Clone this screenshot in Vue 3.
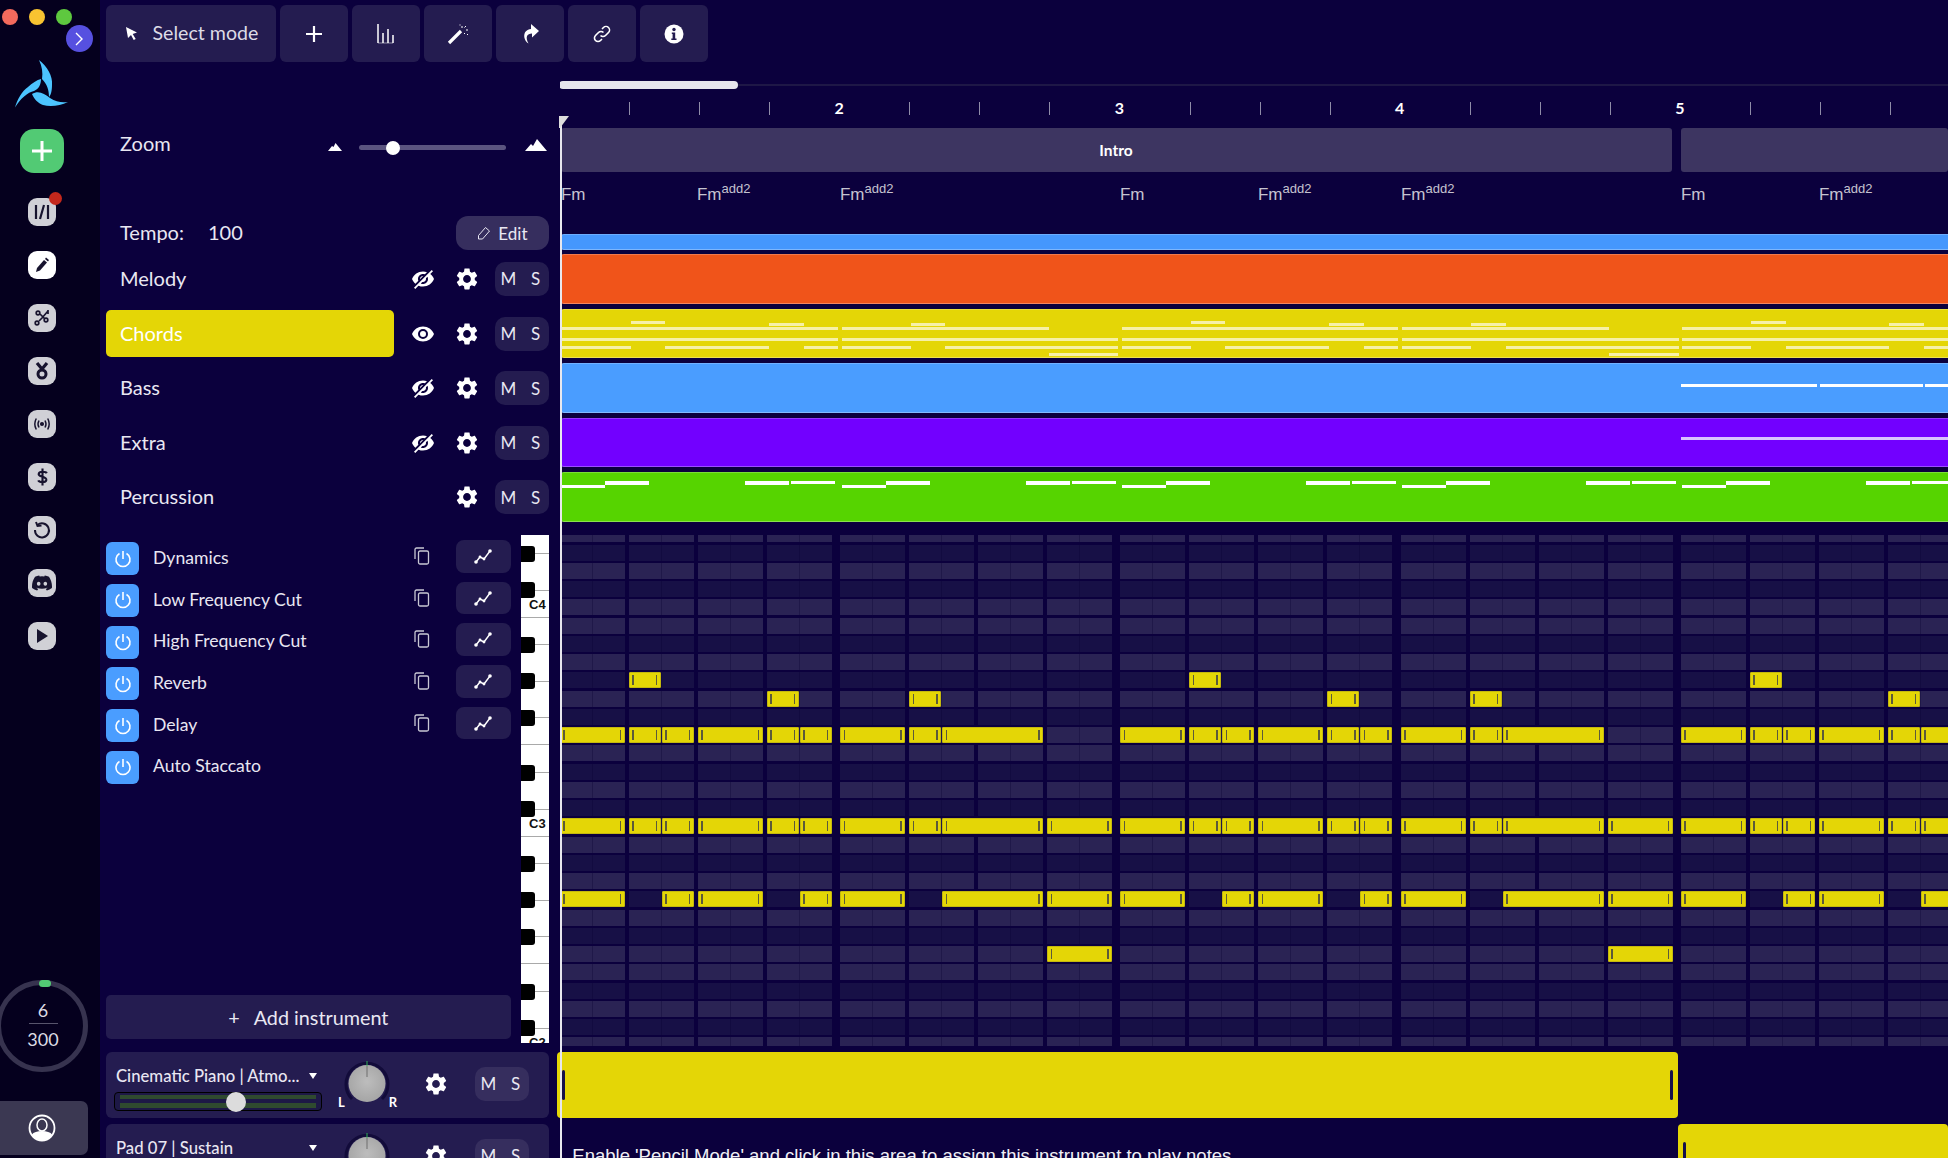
<template>
  <div class="app">
    <aside class="sidebar">
      <div class="dots">
        <span class="dot red"></span>
        <span class="dot yellow"></span>
        <span class="dot green"></span>
      </div>
      <button class="collapse">
        <svg width="12" height="16" viewBox="0 0 12 16"><path d="M3 2l6 6-6 6" fill="none" stroke="#fff" stroke-width="1.4" /></svg>
      </button>
      <svg class="logo" width="53" height="48" viewBox="15 60 53 48">
        <path fill="#4cc4ff" d="M39 60C47 66 53 76 52 85C52 90 51 95 49 97C49 90 47 84 42 79C43 73 42 66 39 60Z" />
        <path fill="#4cc4ff" d="M15 107.500C17 100 22 91 28 87C32 83 37 80 41 79C41 84 39 89 34 91C28 92 20 99 15 107.500Z" />
        <path fill="#4cc4ff" d="M32 94C38 90 44 93 50 98C56 102 62 103 68 102C60 106 50 107 43 105C38 103 34 99 32 94Z" />
      </svg>
      <div class="add-tile">
        <svg width="24" height="24" viewBox="0 0 24 24"><path d="M12 2v20M2 12h20" stroke="#fff" stroke-width="3" /></svg>
      </div>
      <div class="tiles">
        <div class="tile">
          <svg width="18" height="18" viewBox="0 0 18 18"><path d="M3 2v14M15 2v14M11 2L7 16" stroke="#17132e" stroke-width="2.2" fill="none" /></svg>
          <span class="red-dot"></span>
        </div>
        <div class="tile active">
          <svg width="18" height="18" viewBox="0 0 18 18"><path d="M3 16l1-4 7-8 3 2.500-7 8zM12 3l1-1.500 3 2.500-1 1.500z" fill="#17132e" /></svg>
        </div>
        <div class="tile">
          <svg width="20" height="20" viewBox="0 0 20 20" fill="none" stroke="#17132e" stroke-width="1.700">
            <circle cx="6" cy="5" r="1.800" /><circle cx="14" cy="12" r="1.800" /><circle cx="5" cy="15" r="1.800" />
            <path d="M8 6l5 5M7 13l3-3 6-7M16 2v4" />
          </svg>
        </div>
        <div class="tile">
          <svg width="20" height="20" viewBox="0 0 20 20" fill="none" stroke="#17132e">
            <circle cx="10" cy="13" r="4" stroke-width="3" />
            <path d="M5 2l5 6 5-6" stroke-width="3.200" />
          </svg>
        </div>
        <div class="tile">
          <svg width="20" height="20" viewBox="0 0 20 20" fill="none" stroke="#17132e" stroke-width="1.500">
            <circle cx="10" cy="10" r="1.300" fill="#17132e" />
            <path d="M7 6.500q-2 3.500 0 7M13 6.500q2 3.500 0 7M4.300 4.500q-3 5.500 0 11M15.700 4.500q3 5.500 0 11" />
          </svg>
        </div>
        <div class="tile">
          <svg width="17" height="20" viewBox="0 0 20 22" fill="none" stroke="#17132e" stroke-width="2.500">
            <path d="M15 6.500C14 4.500 6 3.800 5.500 7.500C5 11 15 10 14.500 14.500C14 18 6 17.500 5 15M10 1v20" />
          </svg>
        </div>
        <div class="tile">
          <svg width="20" height="20" viewBox="0 0 20 20" fill="none" stroke="#17132e" stroke-width="2">
            <path d="M5.500 5A7 7 0 1 1 3 10" />
            <path d="M4 2l1.500 4 4-.5" />
          </svg>
        </div>
        <div class="tile">
          <svg width="20" height="20" viewBox="0 0 24 24"><path fill="#17132e" :d="discordPath" /></svg>
        </div>
        <div class="tile">
          <svg width="14" height="16" viewBox="0 0 14 16"><path d="M2 1l11 7-11 7z" fill="#17132e" /></svg>
        </div>
      </div>
      <div class="credits">
        <svg width="92" height="92" viewBox="0 0 92 92">
          <circle cx="46" cy="46" r="43.500" fill="none" stroke="#37334f" stroke-width="5" />
          <rect x="43" y="0" width="12" height="7" rx="3.500" fill="#52ca74" />
        </svg>
        <div class="credit-text">
          <span>6</span>
          <i></i>
          <span>300</span>
        </div>
      </div>
      <div class="account">
        <svg width="28" height="28" viewBox="0 0 28 28">
          <circle cx="14" cy="14" r="12.500" fill="none" stroke="#fff" stroke-width="1.800" />
          <ellipse cx="14" cy="11" rx="5" ry="6" fill="none" stroke="#fff" stroke-width="1.500" />
          <path d="M3.500 21c2-3 6-4 10.500-4s8.500 1 10.500 4a13 13 0 0 1-21 0z" fill="#fff" />
        </svg>
      </div>
    </aside>

    <main class="main">
      <div class="toolbar">
        <button class="tool select-tool">
          <svg width="12" height="14" viewBox="0 0 12 14"><path d="M0 0l11 5.500-4.300 1.600 3 5-2 1-2.700-5-3 3z" fill="#fff" /></svg>
          <span>Select mode</span>
        </button>
        <button class="tool">
          <svg width="18" height="18" viewBox="0 0 18 18"><path d="M9 1v16M1 9h16" stroke="#fff" stroke-width="2.200" /></svg>
        </button>
        <button class="tool">
          <svg width="20" height="20" viewBox="0 0 20 20"><path d="M2 0v19M7 9v10M12 5v14M17 11v8" stroke="#fff" stroke-width="1.500" /><path d="M2 19h15" stroke="#fff" stroke-width="0.500" /></svg>
        </button>
        <button class="tool">
          <svg width="22" height="22" viewBox="0 0 22 22">
            <path d="M2 20L14 8" stroke="#fff" stroke-width="3.200" />
            <path d="M15 3v2M19 7h2M19 3l-1.500 1.500M13 1.500v1M20.500 11v1M17 10l1 1" stroke="#fff" stroke-width="1" />
          </svg>
        </button>
        <button class="tool">
          <svg width="18" height="20" viewBox="0 0 18 20"><path d="M10 0l8 7-7 6.500V9.500C6 9.500 4 13 7.500 19.500C2 16 1 6 10 5z" fill="#fff" /></svg>
        </button>
        <button class="tool">
          <svg width="20" height="20" viewBox="0 0 20 20" fill="none" stroke="#fff" stroke-width="1.600">
            <path d="M8.500 11.500a3.500 3.500 0 0 0 5 0l3-3a3.500 3.500 0 0 0-5-5L10 5" />
            <path d="M11.500 8.500a3.500 3.500 0 0 0-5 0l-3 3a3.500 3.500 0 0 0 5 5L10 15" />
          </svg>
        </button>
        <button class="tool">
          <svg width="20" height="20" viewBox="0 0 20 20">
            <circle cx="10" cy="10" r="9.500" fill="#fff" />
            <circle cx="10" cy="5.500" r="1.700" fill="#241c50" />
            <path d="M7.800 8.500h3.400v6h1.300v1.500h-5.200v-1.500h1.300v-4.500h-.8z" fill="#241c50" />
          </svg>
        </button>
      </div>

      <section class="top-section">
        <div class="controls">
          <div class="zoom-row">
            <span class="zoom-label">Zoom</span>
            <svg class="mountain-small" width="14" height="8" viewBox="0 0 14 8"><path d="M0 8l4-5 1.500 1L7.500 0 14 8z" fill="#fff" /></svg>
            <div class="zoom-slider"><span class="zoom-thumb"></span></div>
            <svg class="mountain-big" width="22" height="12" viewBox="0 0 22 12"><path d="M0 12l6-7 2 2L12 0l10 12z" fill="#fff" /></svg>
          </div>
          <div class="tempo-row">
            <span class="tempo-label">Tempo:</span>
            <span class="tempo-value">100</span>
            <button class="edit-btn">
              <svg width="14" height="14" viewBox="0 0 14 14" fill="none" stroke="#e9e7f2" stroke-width="1"><path d="M1.500 9.500L8.500 1.500l4 3.500-7 8H1.500z" /></svg>
              <span>Edit</span>
            </button>
          </div>
          <div class="tracks">
            <div v-for="t in instruments" :key="t.name" class="track-row">
              <div class="track-name" :class="{ selected: t.selected }">{{ t.name }}</div>
              <div class="eye-slot">
                <svg v-if="t.eye === 'on'" width="24" height="24" viewBox="0 0 24 24"><path fill="#fff" :d="eyePath" /></svg>
                <svg v-else-if="t.eye === 'off'" width="24" height="24" viewBox="0 0 24 24"><path fill="#fff" transform="translate(24,0) scale(-1,1)" :d="eyeOffPath" /></svg>
              </div>
              <svg class="gear" width="26" height="26" viewBox="0 0 24 24"><path fill="#fff" :d="gearPath" /></svg>
              <div class="ms-pill"><span>M</span><span>S</span></div>
            </div>
          </div>
        </div>

        <div class="timeline">
          <div class="scroll-track"><span class="scroll-thumb"></span></div>
          <div class="ruler">
            <div v-for="n in 20" :key="n" class="ruler-cell">
              <span v-if="(n - 1) % 4 === 0 && n > 1" class="bar-num">{{ (n - 1) / 4 + 1 }}</span>
              <i v-else-if="n > 1" class="tick"></i>
            </div>
          </div>
          <div class="sections">
            <div class="section-block first">Intro</div>
            <div class="section-block rest"></div>
          </div>
          <div class="chord-row">
            <div v-for="(c, i) in chords" :key="i" class="chord" :style="{ width: c.width + 'px' }">
              Fm<sup v-if="c.add">add2</sup>
            </div>
          </div>
          <div class="mini-tracks">
            <div class="mini thin" style="background: #4597fd"></div>
            <div class="mini" style="background: #f0541a"></div>
            <div class="mini" style="background: #e4d606">
              <i v-for="(m, i) in miniChords" :key="i" class="mini-note pale" :style="m"></i>
            </div>
            <div class="mini" style="background: #4a9dff">
              <i v-for="(m, i) in miniBass" :key="i" class="mini-note" :style="m"></i>
            </div>
            <div class="mini" style="background: #7200ff">
              <i v-for="(m, i) in miniExtra" :key="i" class="mini-note lilac" :style="m"></i>
            </div>
            <div class="mini" style="background: #56d400">
              <i v-for="(m, i) in miniPerc" :key="i" class="mini-note" :style="m"></i>
            </div>
          </div>
        </div>
      </section>

      <section class="mid-section">
        <div class="mid-left">
          <div class="effects">
            <div v-for="(e, i) in effects" :key="e" class="effect-row">
              <div class="power">
                <svg width="20" height="20" viewBox="0 0 20 20" fill="none" stroke="#fff" stroke-width="1.600">
                  <path d="M6.500 4.500a7 7 0 1 0 7 0M10 2v8" />
                </svg>
              </div>
              <span class="effect-name">{{ e }}</span>
              <template v-if="i < 5">
                <svg class="copy" width="16" height="18" viewBox="0 0 16 18" fill="none" stroke="#c9c7d4" stroke-width="1.300">
                  <rect x="4.500" y="4" width="10" height="13" rx="1.500" />
                  <path d="M1 12V2.500A1.500 1.500 0 0 1 2.500 1H10" />
                </svg>
                <button class="curve-btn">
                  <svg width="18" height="15" viewBox="0 0 18 15" fill="#fff">
                    <path d="M2 13l4-5 4 2 6-8" fill="none" stroke="#fff" stroke-width="1.400" />
                    <circle cx="2" cy="13" r="1.800" /><circle cx="6" cy="8" r="1.400" /><circle cx="10" cy="10" r="1.400" /><circle cx="16" cy="2" r="1.800" />
                  </svg>
                </button>
              </template>
            </div>
            <button class="add-instrument"><span class="add-plus">+</span>Add instrument</button>
          </div>
          <div class="piano">
            <div class="piano-inner">
              <div v-for="r in rows" :key="r.k" class="key" :class="{ split: r.pc === 0 || r.pc === 5 }">
                <template v-if="r.black">
                  <i class="key-line"></i>
                  <i class="black-key"></i>
                </template>
                <span v-if="r.label" class="key-label">{{ r.label }}</span>
              </div>
            </div>
          </div>
        </div>

        <div class="roll">
          <div class="roll-inner">
            <div v-for="r in rows" :key="r.k" class="roll-row" :class="{ dark: r.black }">
              <div v-for="b in 6" :key="b" class="bar">
                <div v-for="q in 4" :key="q" class="beat"><i></i><i></i></div>
              </div>
              <div v-for="(n, i) in r.notes" :key="i" class="note" :style="n"></div>
            </div>
          </div>
        </div>
      </section>

      <section class="bottom-section">
        <div class="cards">
          <div v-for="c in cards" :key="c" class="card">
            <div class="card-left">
              <div class="card-name">
                <span>{{ c }}</span>
                <svg width="8" height="6" viewBox="0 0 8 6"><path d="M0 0h8L4 6z" fill="#fff" /></svg>
              </div>
              <div class="volume">
                <i></i><i></i>
                <span class="volume-thumb"></span>
              </div>
            </div>
            <div class="knob">
              <svg width="60" height="50" viewBox="0 0 60 50">
                <path d="M15 39A21 21 0 1 1 45 39" fill="none" stroke="#120b3a" stroke-width="3" />
                <defs>
                  <radialGradient id="knobFill" cx="0.5" cy="0.45" r="0.6">
                    <stop offset="0" stop-color="#bdbdbd" />
                    <stop offset="1" stop-color="#a3a3a3" />
                  </radialGradient>
                </defs>
                <circle cx="30" cy="23.500" r="18.500" fill="url(#knobFill)" />
                <path d="M30 1v5" stroke="#2fae55" stroke-width="1" />
                <path d="M30 6v11" stroke="#6e6e6e" stroke-width="1" />
              </svg>
              <span class="knob-l">L</span>
              <span class="knob-r">R</span>
            </div>
            <svg class="card-gear" width="26" height="26" viewBox="0 0 24 24"><path fill="#fff" :d="gearPath" /></svg>
            <div class="ms-pill card-pill"><span>M</span><span>S</span></div>
          </div>
        </div>
        <div class="lanes">
          <div class="lane">
            <div class="clip first-clip">
              <i class="handle"></i>
              <i class="handle"></i>
            </div>
          </div>
          <div class="lane">
            <p class="hint">Enable 'Pencil Mode' and click in this area to assign this instrument to play notes</p>
            <div class="clip second-clip"><i class="handle"></i></div>
          </div>
        </div>
      </section>

      <div class="playhead"></div>
      <svg class="playhead-cap" width="10" height="12" viewBox="0 0 10 12"><path d="M0 0h10L1 12H0z" fill="#ddd" /></svg>
    </main>
  </div>
</template>

<script setup>
const gearPath = 'M19.14 12.94c.04-.3.06-.61.06-.94 0-.32-.02-.64-.07-.94l2.03-1.58c.18-.14.23-.41.12-.61l-1.92-3.32c-.12-.22-.37-.29-.59-.22l-2.39.96c-.5-.38-1.03-.7-1.62-.94l-.36-2.54c-.04-.24-.24-.41-.48-.41h-3.84c-.24 0-.43.17-.47.41l-.36 2.54c-.59.24-1.13.57-1.62.94l-2.39-.96c-.22-.08-.47 0-.59.22L2.74 8.87c-.12.21-.08.47.12.61l2.03 1.58c-.05.3-.09.63-.09.94s.02.64.07.94l-2.03 1.58c-.18.14-.23.41-.12.61l1.92 3.32c.12.22.37.29.59.22l2.39-.96c.5.38 1.03.7 1.62.94l.36 2.54c.05.24.24.41.48.41h3.84c.24 0 .44-.17.47-.41l.36-2.54c.59-.24 1.13-.56 1.62-.94l2.39.96c.22.08.47 0 .59-.22l1.92-3.32c.12-.22.07-.47-.12-.61l-2.01-1.58zM12 15.6c-1.98 0-3.6-1.62-3.6-3.6s1.62-3.6 3.6-3.6 3.6 1.62 3.6 3.6-1.62 3.6-3.6 3.6z'
const eyePath = 'M12 4.5C7 4.5 2.73 7.61 1 12c1.73 4.39 6 7.5 11 7.5s9.27-3.11 11-7.5c-1.73-4.39-6-7.5-11-7.5zM12 17a5 5 0 1 1 0-10 5 5 0 0 1 0 10zm0-8a3 3 0 1 0 0 6 3 3 0 0 0 0-6z'
const eyeOffPath = 'M12 7c2.76 0 5 2.24 5 5 0 .65-.13 1.26-.36 1.83l2.92 2.92c1.51-1.26 2.7-2.89 3.43-4.75-1.73-4.39-6-7.5-11-7.5-1.4 0-2.74.25-3.98.7l2.16 2.16C10.74 7.13 11.35 7 12 7zM2 4.27l2.28 2.28.46.46C3.08 8.3 1.78 10.02 1 12c1.73 4.39 6 7.5 11 7.5 1.55 0 3.03-.3 4.38-.84l.42.42L19.73 22 21 20.73 3.27 3 2 4.27zM7.53 9.8l1.55 1.55c-.05.21-.08.43-.08.65 0 1.66 1.34 3 3 3 .22 0 .44-.03.65-.08l1.55 1.55c-.67.33-1.41.53-2.2.53-2.76 0-5-2.24-5-5 0-.79.2-1.53.53-2.2zm4.31-.78l3.15 3.15.02-.16c0-1.66-1.34-3-3-3l-.17.01z'
const discordPath = 'M20.317 4.37a19.791 19.791 0 0 0-4.885-1.515.074.074 0 0 0-.079.037c-.21.375-.444.864-.608 1.25a18.27 18.27 0 0 0-5.487 0 12.64 12.64 0 0 0-.617-1.25.077.077 0 0 0-.079-.037A19.736 19.736 0 0 0 3.677 4.37a.07.07 0 0 0-.032.027C.533 9.046-.32 13.58.099 18.057a.082.082 0 0 0 .031.057 19.9 19.9 0 0 0 5.993 3.03.078.078 0 0 0 .084-.028 14.09 14.09 0 0 0 1.226-1.994.076.076 0 0 0-.041-.106 13.107 13.107 0 0 1-1.872-.892.077.077 0 0 1-.008-.128 10.2 10.2 0 0 0 .372-.292.074.074 0 0 1 .077-.01c3.928 1.793 8.18 1.793 12.062 0a.074.074 0 0 1 .078.01c.12.098.246.198.373.292a.077.077 0 0 1-.006.127 12.299 12.299 0 0 1-1.873.892.077.077 0 0 0-.041.107c.36.698.772 1.362 1.225 1.993a.076.076 0 0 0 .084.028 19.839 19.839 0 0 0 6.002-3.03.077.077 0 0 0 .032-.054c.5-5.177-.838-9.674-3.549-13.66a.061.061 0 0 0-.031-.03zM8.02 15.33c-1.183 0-2.157-1.085-2.157-2.419 0-1.333.956-2.419 2.157-2.419 1.21 0 2.176 1.096 2.157 2.42 0 1.333-.956 2.418-2.157 2.418zm7.975 0c-1.183 0-2.157-1.085-2.157-2.419 0-1.333.955-2.419 2.157-2.419 1.21 0 2.176 1.096 2.157 2.42 0 1.333-.946 2.418-2.157 2.418z'

const instruments = [
  { name: 'Melody', eye: 'off' },
  { name: 'Chords', eye: 'on', selected: true },
  { name: 'Bass', eye: 'off' },
  { name: 'Extra', eye: 'off' },
  { name: 'Percussion', eye: null }
]
const effects = ['Dynamics', 'Low Frequency Cut', 'High Frequency Cut', 'Reverb', 'Delay', 'Auto Staccato']
const cards = ['Cinematic Piano | Atmo...', 'Pad 07 | Sustain']

const chords = [
  { width: 136 }, { width: 143, add: true }, { width: 280, add: true },
  { width: 138 }, { width: 143, add: true }, { width: 280, add: true },
  { width: 138 }, { width: 143, add: true }
]

// note spans are in half beats, [start, end), odd bars and even bars alternate
const oddBar = {
  7: [[2, 3]],
  8: [[6, 7]],
  10: [[0, 2], [2, 3], [3, 4], [4, 6], [6, 7], [7, 8]],
  15: [[0, 2], [2, 3], [3, 4], [4, 6], [6, 7], [7, 8]],
  19: [[0, 2], [3, 4], [4, 6], [7, 8]]
}
const evenBar = {
  8: [[2, 3]],
  10: [[0, 2], [2, 3], [3, 6]],
  15: [[0, 2], [2, 3], [3, 6], [6, 8]],
  19: [[0, 2], [3, 6], [6, 8]],
  22: [[6, 8]]
}
const barWidth = 280.3

function subX(bar, s) {
  return bar * barWidth + Math.floor(s / 2) * 69 + (s % 2) * 33
}

function notesFor(k) {
  const out = []
  for (let bar = 0; bar < 5; bar++) {
    const spans = (bar % 2 === 0 ? oddBar : evenBar)[k] || []
    for (const [s, e] of spans) {
      const left = subX(bar, s)
      const right = subX(bar, e - 1) + 32
      out.push({ left: left + 'px', width: right - left + 'px' })
    }
  }
  return out
}

const rows = []
for (let k = -1; k <= 27; k++) {
  const down = k - 3
  const pc = ((-down % 12) + 12) % 12
  const black = [1, 3, 6, 8, 10].includes(pc)
  const label = pc === 0 ? 'C' + (4 - Math.round(down / 12)) : ''
  rows.push({ k, pc, black, label, notes: notesFor(k) })
}

function mini(left, width, top, height) {
  return { left: left + 'px', width: width + 'px', top: top + 'px', height: height + 'px' }
}

const miniChords = []
for (let bar = 0; bar < 5; bar++) {
  const pattern = bar % 2 === 0 ? oddBar : evenBar
  for (const row of Object.keys(pattern)) {
    for (const [s, e] of pattern[row]) {
      miniChords.push(mini(bar * 280.1 + s * 34.6, (e - s) * 34.6, Number(row) * 2.15 - 3, 3))
    }
  }
}

const miniBass = [mini(1120, 103, 21, 3), mini(1223, 33, 21, 3), mini(1259, 69, 21, 3), mini(1328, 34, 21, 3), mini(1364, 30, 21, 3)]
const miniExtra = [mini(1120, 138, 19, 3), mini(1258, 130, 19, 3)]

const miniPerc = []
for (let bar = 0; bar < 5; bar++) {
  const x = bar * 280.1
  miniPerc.push(mini(x, 44, 13, 3), mini(x + 44, 44, 9, 4), mini(x + 184, 44, 9, 4), mini(x + 230, 44, 9, 3))
}
</script>

<style>
body {
  margin: 0;
  background: #0b003d;
  overflow: hidden;
}
</style>

<style scoped>
.app {
  display: flex;
  width: 1948px;
  height: 1158px;
  overflow: hidden;
  background: #0b003d;
  color: #e9e7f2;
  font-family: 'Lato', 'Noto Sans', sans-serif;
  font-size: 20px;
}

button {
  border: none;
  color: inherit;
  font: inherit;
  padding: 0;
}

/* sidebar */
.sidebar {
  position: relative;
  flex: 0 0 100px;
  box-sizing: border-box;
  display: flex;
  flex-direction: column;
  background: #05001e;
  padding-top: 9px;
  overflow: hidden;
}

.dots {
  display: flex;
  gap: 11px;
  padding-left: 2px;
}

.dot {
  width: 16px;
  height: 16px;
  border-radius: 50%;
}

.red { background: #f46a5d; }
.yellow { background: #f8c331; }
.green { background: #5ec83f; }

.collapse {
  position: absolute;
  left: 65.500px;
  top: 25px;
  width: 27px;
  height: 27px;
  border-radius: 50%;
  background: #5650e0;
  display: flex;
  align-items: center;
  justify-content: center;
}

.logo {
  margin: 35px 0 0 15px;
}

.add-tile {
  width: 43.500px;
  height: 44px;
  margin: 21px 0 0 20px;
  border-radius: 14px;
  background: #52ca74;
  display: flex;
  align-items: center;
  justify-content: center;
}

.tiles {
  display: flex;
  flex-direction: column;
  gap: 25px;
  margin: 24.500px 0 0 28px;
}

.tile {
  position: relative;
  width: 28px;
  height: 28px;
  border-radius: 9px;
  background: #d0d0d6;
  display: flex;
  align-items: center;
  justify-content: center;
}

.tile.active {
  background: #fff;
}

.red-dot {
  position: absolute;
  right: -6px;
  top: -6px;
  width: 13px;
  height: 13px;
  border-radius: 50%;
  background: #c4281c;
}

.credits {
  position: relative;
  margin: auto 0 0 -4px;
  width: 92px;
  height: 92px;
}

.credits svg {
  display: block;
}

.credit-text {
  position: absolute;
  inset: 0;
  display: flex;
  flex-direction: column;
  align-items: center;
  justify-content: center;
  font-size: 18px;
  line-height: 22px;
  color: #dcdbe4;
  padding: 0 0 3px 2px;
  box-sizing: border-box;
}

.credit-text i {
  width: 29px;
  height: 1px;
  margin: 2px 0 4px;
  background: #57546c;
}

.account {
  margin: 29px 0 3px;
  width: 88px;
  height: 54.500px;
  box-sizing: border-box;
  padding-right: 5px;
  border-radius: 0 7px 7px 0;
  background: #3b3852;
  display: flex;
  align-items: center;
  justify-content: center;
}

/* main */
.main {
  position: relative;
  flex: 1;
  min-width: 0;
  display: flex;
  flex-direction: column;
}

.toolbar {
  display: flex;
  gap: 4px;
  height: 67px;
  box-sizing: border-box;
  padding: 5px 6px;
  flex: none;
}

.tool {
  width: 68px;
  height: 57px;
  border-radius: 6px;
  background: #241c50;
  display: flex;
  align-items: center;
  justify-content: center;
}

.select-tool {
  width: 170px;
  gap: 14.500px;
  color: #dddbe6;
  font-size: 19.600px;
  justify-content: flex-start;
  padding-left: 20px;
  box-sizing: border-box;
}

.select-tool span {
  margin-top: -2px;
}

.top-section {
  display: flex;
  height: 468.300px;
  flex: none;
}

.controls {
  flex: 0 0 460px;
  box-sizing: border-box;
  padding: 57px 11.300px 0 6px;
}

.zoom-row {
  display: flex;
  align-items: center;
  height: 40px;
  padding-left: 14px;
}

.zoom-label {
  width: 208px;
  margin-top: -3px;
}

.mountain-small {
  margin-top: 6px;
}

.zoom-slider {
  position: relative;
  width: 147px;
  height: 5px;
  margin: 7px 0 0 17px;
  border-radius: 3px;
  background: #5b5480;
}

.zoom-thumb {
  position: absolute;
  left: 26.500px;
  top: -4.500px;
  width: 14px;
  height: 14px;
  border-radius: 50%;
  background: #fff;
}

.mountain-big {
  margin: 2px 0 0 18.500px;
}

.tempo-row {
  display: flex;
  align-items: center;
  height: 34px;
  margin-top: 52px;
  padding-left: 14px;
}

.tempo-label {
  width: 88px;
  margin-top: -3px;
}

.tempo-value {
  flex: 1;
  margin-top: -3px;
}

.edit-btn {
  width: 93.500px;
  height: 33.500px;
  border-radius: 12px;
  background: #362e5e;
  font-size: 17px;
  display: flex;
  align-items: center;
  justify-content: center;
  gap: 7px;
}

.tracks {
  display: flex;
  flex-direction: column;
  gap: 7.100px;
  margin-top: 5.200px;
}

.track-row {
  display: flex;
  align-items: center;
  height: 47.500px;
}

.track-name {
  width: 288px;
  height: 100%;
  box-sizing: border-box;
  padding: 0 0 2px 14px;
  display: flex;
  align-items: center;
  border-radius: 5px;
}

.track-name.selected {
  background: #e4d606;
  color: #fff;
}

.eye-slot {
  width: 24px;
  height: 24px;
  margin-left: 16.500px;
}

.gear {
  margin-left: 19.500px;
}

.ms-pill {
  display: flex;
  align-items: center;
  justify-content: space-between;
  box-sizing: border-box;
  width: 54.700px;
  height: 34px;
  padding: 0 9px 0 6px;
  margin-left: 14.500px;
  border-radius: 10px;
  background: #241c50;
  font-size: 17px;
}

/* timeline */
.timeline {
  flex: 1;
  min-width: 0;
  overflow: hidden;
}

.scroll-track {
  position: relative;
  height: 8px;
  margin: 14px 0 0 -1px;
}

.scroll-track::before {
  content: '';
  position: absolute;
  left: 179px;
  right: 0;
  top: 3px;
  height: 2px;
  background: #1e1746;
}

.scroll-thumb {
  display: block;
  width: 179px;
  height: 8px;
  border-radius: 4px;
  background: #e6e5ec;
}

.ruler {
  display: flex;
  height: 13px;
  margin: 13px 0 0 -1.500px;
}

.ruler-cell {
  position: relative;
  flex: 0 0 70.075px;
}

.tick {
  display: block;
  width: 1px;
  height: 13px;
  background: #8f8ca8;
}

.bar-num {
  display: block;
  width: 16px;
  margin: -2px 0 0 -8px;
  font-size: 16px;
  font-weight: 700;
  line-height: 16px;
  text-align: center;
  color: #fff;
}

.sections {
  display: flex;
  gap: 9px;
  height: 44px;
  margin: 13px 0 0 1px;
}

.section-block {
  background: #3d3561;
  border-radius: 3px;
  font-size: 15.500px;
  font-weight: 700;
  color: #fff;
  display: flex;
  align-items: center;
  justify-content: center;
}

.section-block.first {
  flex: 0 0 1111px;
  padding-right: 2px;
  box-sizing: border-box;
}

.section-block.rest {
  flex: 1;
}

.chord-row {
  display: flex;
  height: 24px;
  margin: 12px 0 0 0.500px;
  font-family: 'Liberation Sans', sans-serif;
  font-size: 17px;
  line-height: 22px;
  color: #c5c3d0;
}

.chord {
  flex: none;
  white-space: nowrap;
}

.chord sup {
  font-size: 13px;
  line-height: 0;
  vertical-align: 7px;
}

.mini-tracks {
  display: flex;
  flex-direction: column;
  gap: 4.850px;
  margin: 26.300px 0 0 1px;
}

.mini {
  position: relative;
  height: 49.700px;
  box-sizing: border-box;
  border-radius: 3px 0 0 3px;
  box-shadow: inset 0 1px 0 rgba(255, 255, 255, 0.22), inset 0 -1px 0 rgba(255, 255, 255, 0.3);
}

.mini.thin {
  height: 15.400px;
  margin-bottom: -0.500px;
}

.mini-note {
  position: absolute;
  background: #fff;
}

.mini-note.pale {
  background: #f6f0a6;
}

.mini-note.lilac {
  background: #d9c4ff;
}

/* editor */
.mid-section {
  display: flex;
  flex: none;
  height: 510.700px;
}

.mid-left {
  display: flex;
  flex: 0 0 460px;
  box-sizing: border-box;
  padding-left: 6px;
}

.effects {
  display: flex;
  flex-direction: column;
  width: 404.700px;
  padding-top: 4.700px;
}

.effect-row {
  display: flex;
  height: 41.700px;
  flex: none;
}

.power {
  width: 33px;
  height: 33px;
  margin-top: 2.300px;
  border-radius: 6px;
  background: #4a9dff;
  display: flex;
  align-items: center;
  justify-content: center;
}

.effect-name {
  flex: 1;
  margin-left: 14px;
  height: 35px;
  line-height: 35px;
  font-size: 17.600px;
}

.copy {
  margin: 7px 26.500px 0 0;
}

.curve-btn {
  width: 54.700px;
  height: 32.700px;
  border-radius: 8px;
  background: #241c50;
  display: flex;
  align-items: center;
  justify-content: center;
}

.add-instrument {
  flex: none;
  margin-top: auto;
  margin-bottom: 6.700px;
  height: 44px;
  border-radius: 5px;
  background: #241c50;
  font-size: 19.800px;
  font-weight: 400;
}

.add-plus {
  margin-right: 14px;
}

.piano {
  flex: none;
  width: 27.400px;
  height: 507.700px;
  margin-left: 10.600px;
  background: #fff;
  overflow: hidden;
}

.piano-inner {
  margin-top: -8.900px;
}

.key {
  position: relative;
  box-sizing: border-box;
  height: 18.250px;
}

.key.split {
  border-bottom: 1px solid #a9a9a9;
}

.key-line {
  position: absolute;
  left: 0;
  right: 0;
  top: 8.500px;
  height: 1px;
  background: #a9a9a9;
}

.black-key {
  position: absolute;
  left: 0;
  top: 1px;
  width: 14px;
  height: 16px;
  border-radius: 0 3px 3px 0;
  background: #000;
}

.key-label {
  position: absolute;
  right: 3px;
  top: -2px;
  font-family: 'Liberation Sans', sans-serif;
  font-size: 13px;
  font-weight: 700;
  line-height: 16px;
  color: #111;
}

.roll {
  flex: 1;
  min-width: 0;
  overflow: hidden;
}

.roll-inner {
  margin: -8.900px 0 0 -0.300px;
}

.roll-row {
  position: relative;
  display: flex;
  gap: 8.300px;
  height: 18.250px;
  box-sizing: border-box;
  padding-bottom: 2.250px;
}

.bar {
  flex: none;
  display: flex;
  gap: 4px;
}

.beat {
  display: flex;
  gap: 1px;
  flex: none;
  background: #1f1849;
}

.beat i {
  width: 32px;
  background: #2a2354;
}

.roll-row.dark .beat {
  background: #120b40;
}

.roll-row.dark .beat i {
  background: #171046;
}

.note {
  position: absolute;
  top: 0;
  height: 16px;
  box-sizing: border-box;
  border: 1px solid #c4b80e;
  border-radius: 1px;
  background: #e4d606;
}

.note::before,
.note::after {
  content: '';
  position: absolute;
  top: 2px;
  width: 1.500px;
  height: 10px;
  background: #5c5a3a;
}

.note::before { left: 2.500px; }
.note::after { right: 2.500px; }

/* bottom */
.bottom-section {
  display: flex;
  flex: 1;
  min-height: 0;
  overflow: hidden;
}

.cards {
  flex: 0 0 460px;
  box-sizing: border-box;
  padding: 5.700px 11px 0 6px;
}

.card {
  display: flex;
  align-items: flex-start;
  height: 66.300px;
  margin-bottom: 5.700px;
  box-sizing: border-box;
  padding-left: 8px;
  border-radius: 6px;
  background: #241c50;
}

.card-left {
  flex: 0 0 208px;
}

.card-name {
  display: flex;
  align-items: center;
  justify-content: space-between;
  width: 201px;
  height: 30px;
  margin: 9px 0 1px 2px;
  font-size: 16.700px;
  font-weight: 500;
  white-space: nowrap;
}

.card-name span {
  overflow: hidden;
}

.volume {
  position: relative;
  height: 19.700px;
  box-sizing: border-box;
  padding: 2px 5px;
  border: 1.500px solid #000;
  border-radius: 4px;
  background: #1d1846;
  display: flex;
  flex-direction: column;
  gap: 4px;
}

.volume i {
  height: 4.500px;
  background: #2f4a2f;
}

.volume-thumb {
  position: absolute;
  left: 111px;
  top: -1px;
  width: 20px;
  height: 20px;
  border-radius: 50%;
  background: #dcdcdc;
}

.knob {
  position: relative;
  flex: none;
  width: 60px;
  height: 50px;
  margin: 8px 0 0 15px;
}

.knob svg {
  display: block;
}

.knob-l,
.knob-r {
  position: absolute;
  top: 34px;
  font-size: 13px;
  font-weight: 700;
  line-height: 16px;
  color: #fff;
}

.knob-l { left: 1px; }
.knob-r { right: 0; }

.card-gear {
  flex: none;
  margin: 19px 0 0 26px;
}

.card-pill {
  flex: none;
  background: #362e5e;
  margin: 15.300px 0 0 25.500px;
}

.lanes {
  flex: 1;
  min-width: 0;
  margin-left: -2.700px;
  padding-top: 5.700px;
}

.lane {
  display: flex;
  height: 66.300px;
  margin-bottom: 5.700px;
}

.clip {
  flex: none;
  position: relative;
  display: flex;
  align-items: center;
  justify-content: space-between;
  box-sizing: border-box;
  background: #e4d606;
  border-radius: 4px;
  padding: 0 5px 0 5px;
}

.first-clip {
  width: 1120.500px;
}

.second-clip {
  flex: 1;
  height: 66.300px;
}

.handle {
  display: block;
  width: 3px;
  height: 30px;
  border-radius: 2px;
  background: #16104a;
}

.hint {
  flex: 0 0 1120.500px;
  box-sizing: border-box;
  margin: 0;
  padding: 22px 0 0 15px;
  font-family: 'Liberation Sans', sans-serif;
  font-size: 18.500px;
  line-height: 20px;
  color: #f0eff5;
  white-space: nowrap;
}

.playhead {
  position: absolute;
  left: 460px;
  top: 116px;
  bottom: 0;
  width: 1.500px;
  background: #e8e8ee;
}

.playhead-cap {
  position: absolute;
  left: 459px;
  top: 116px;
}
</style>
